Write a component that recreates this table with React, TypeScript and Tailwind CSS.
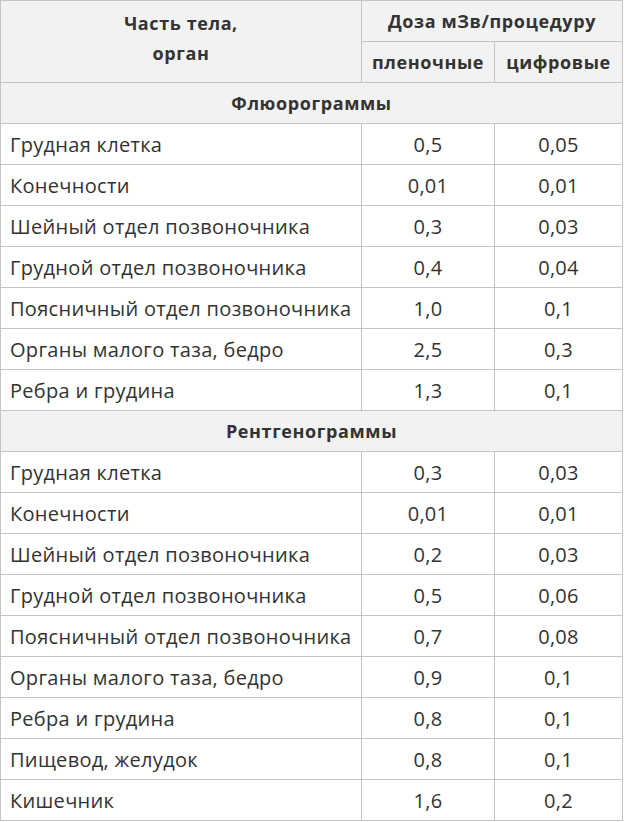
import React from 'react';

type Row = [string, string, string];

const fluoro: Row[] = [
  ['Грудная клетка', '0,5', '0,05'],
  ['Конечности', '0,01', '0,01'],
  ['Шейный отдел позвоночника', '0,3', '0,03'],
  ['Грудной отдел позвоночника', '0,4', '0,04'],
  ['Поясничный отдел позвоночника', '1,0', '0,1'],
  ['Органы малого таза, бедро', '2,5', '0,3'],
  ['Ребра и грудина', '1,3', '0,1'],
];

const xray: Row[] = [
  ['Грудная клетка', '0,3', '0,03'],
  ['Конечности', '0,01', '0,01'],
  ['Шейный отдел позвоночника', '0,2', '0,03'],
  ['Грудной отдел позвоночника', '0,5', '0,06'],
  ['Поясничный отдел позвоночника', '0,7', '0,08'],
  ['Органы малого таза, бедро', '0,9', '0,1'],
  ['Ребра и грудина', '0,8', '0,1'],
  ['Пищевод, желудок', '0,8', '0,1'],
  ['Кишечник', '1,6', '0,2'],
];

const cell = 'border border-[#c4c4c4] h-[41px] p-0';
const head = 'text-center font-bold text-[18px] tracking-[0.6px]';

function Section({ title, rows }: { title: string; rows: Row[] }) {
  return <>
      <tr className="bg-[#f2f2f2]">
        <td colSpan={3} className={`${cell} ${head}`}>
          {title}
        </td>
      </tr>
      {rows.map((r, i) => <tr key={i}>
          <td className={`${cell} pl-[9px] pt-[2px] text-left`}>{r[0]}</td>
          <td className={`${cell} pt-[2px] text-center`}>{r[1]}</td>
          <td className={`${cell} pt-[2px] text-center`}>{r[2]}</td>
        </tr>)}
    </>;
}

export default function App() {
  return <div className="w-[624px] h-[822px] bg-white overflow-hidden">
      <table className="border-collapse w-[622px] table-fixed text-[20px] tracking-[0.3px] text-[#333] leading-none" style={{ fontFamily: '"Open Sans", sans-serif' }}>
        <colgroup>
          <col className="w-[361px]" />
          <col className="w-[133px]" />
          <col className="w-[128px]" />
        </colgroup>
        <tbody>
          <tr className="bg-[#f2f2f2]">
            <td rowSpan={2} className={`${cell} ${head} leading-[30px] pb-[8px]`}>
              Часть тела,<br />орган
            </td>
            <td colSpan={2} className={`${cell} ${head}`}>
              Доза мЗв/процедуру
            </td>
          </tr>
          <tr className="bg-[#f2f2f2]">
            <td className={`${cell} ${head}`}>пленочные</td>
            <td className={`${cell} ${head}`}>цифровые</td>
          </tr>
          <Section title="Флюорограммы" rows={fluoro} />
          <Section title="Рентгенограммы" rows={xray} />
        </tbody>
      </table>
    </div>;
}
